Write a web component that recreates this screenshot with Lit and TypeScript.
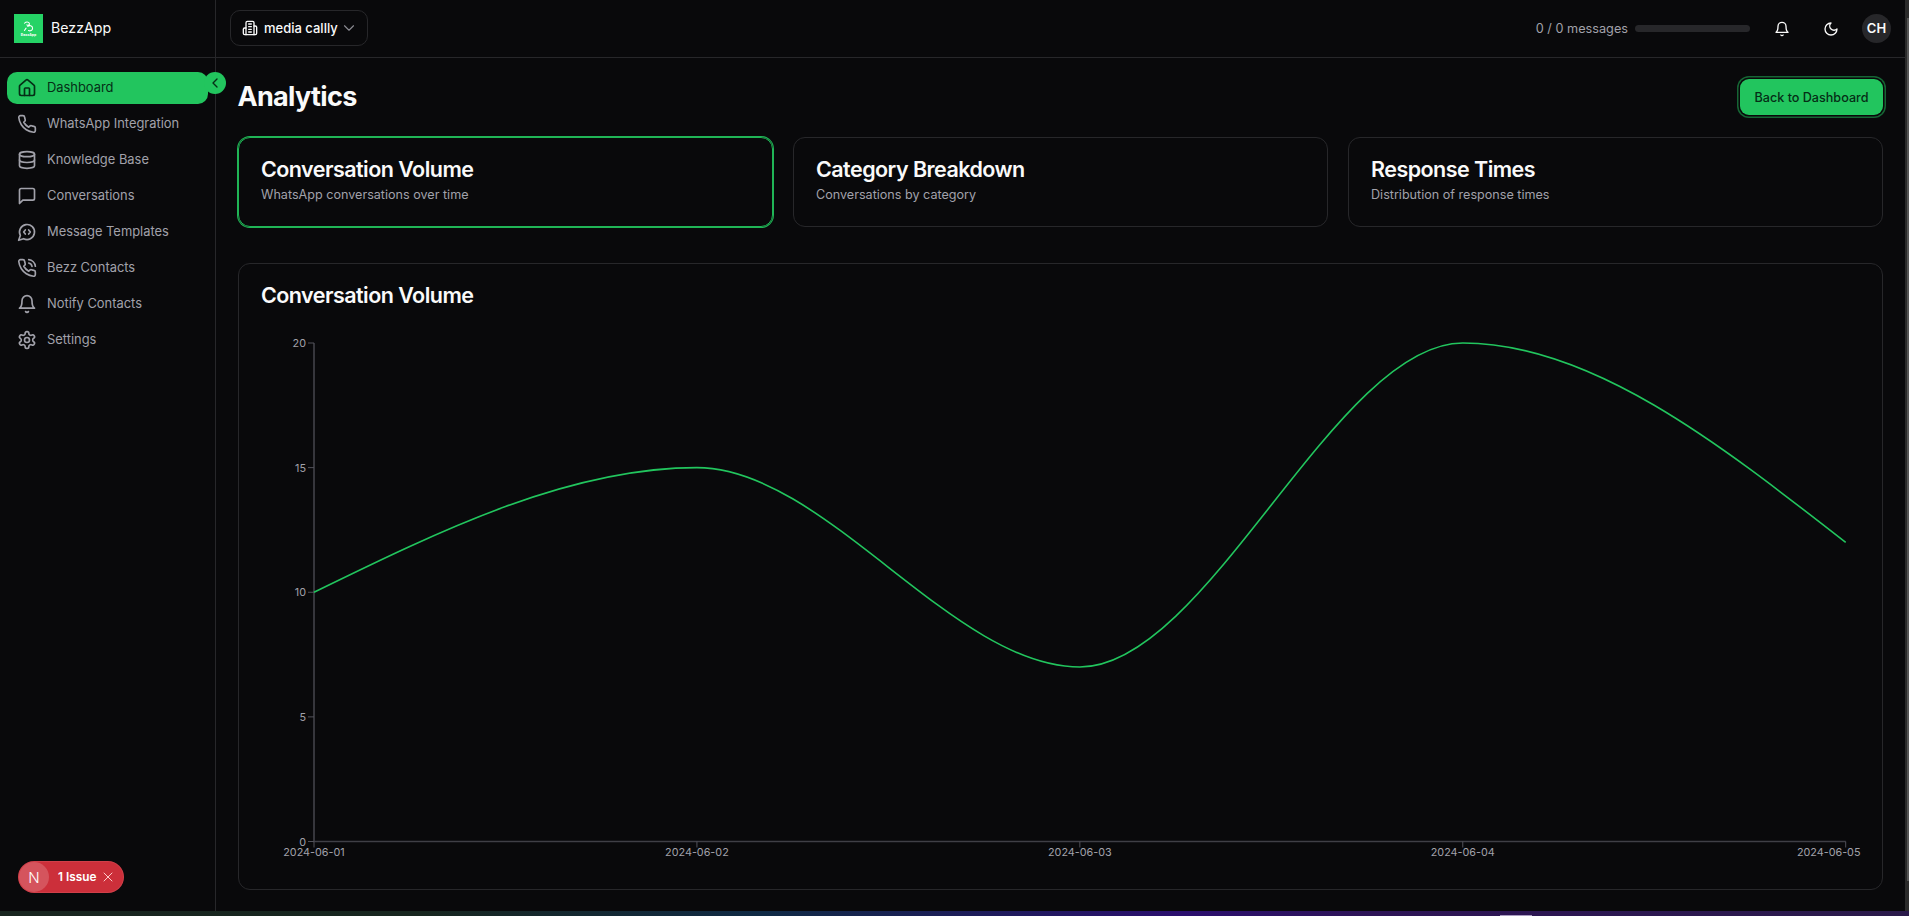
import { LitElement, html, css, svg } from "lit";
import { customElement } from "lit/decorators.js";

const icons: Record<string, unknown> = {
  home: svg`<path d="M15 21v-8a1 1 0 0 0-1-1h-4a1 1 0 0 0-1 1v8"/><path d="M3 10a2 2 0 0 1 .709-1.528l7-5.999a2 2 0 0 1 2.582 0l7 5.999A2 2 0 0 1 21 10v9a2 2 0 0 1-2 2H5a2 2 0 0 1-2-2z"/>`,
  phone: svg`<path d="M22 16.92v3a2 2 0 0 1-2.18 2 19.79 19.79 0 0 1-8.63-3.07 19.5 19.5 0 0 1-6-6 19.79 19.79 0 0 1-3.07-8.67A2 2 0 0 1 4.11 2h3a2 2 0 0 1 2 1.72 12.84 12.84 0 0 0 .7 2.81 2 2 0 0 1-.45 2.11L8.09 9.91a16 16 0 0 0 6 6l1.27-1.27a2 2 0 0 1 2.11-.45 12.84 12.84 0 0 0 2.81.7A2 2 0 0 1 22 16.92z"/>`,
  database: svg`<ellipse cx="12" cy="5" rx="9" ry="3"/><path d="M3 5V19A9 3 0 0 0 21 19V5"/><path d="M3 12A9 3 0 0 0 21 12"/>`,
  message: svg`<path d="M21 15a2 2 0 0 1-2 2H7l-4 4V5a2 2 0 0 1 2-2h14a2 2 0 0 1 2 2z"/>`,
  template: svg`<path d="M10 9.5 8 12l2 2.5"/><path d="m14 9.5 2 2.5-2 2.5"/><path d="M7.9 20A9 9 0 1 0 4 16.1L2 22z"/>`,
  phoneCall: svg`<path d="M22 16.92v3a2 2 0 0 1-2.18 2 19.79 19.79 0 0 1-8.63-3.07 19.5 19.5 0 0 1-6-6 19.79 19.79 0 0 1-3.07-8.67A2 2 0 0 1 4.11 2h3a2 2 0 0 1 2 1.72 12.84 12.84 0 0 0 .7 2.81 2 2 0 0 1-.45 2.11L8.09 9.91a16 16 0 0 0 6 6l1.27-1.27a2 2 0 0 1 2.11-.45 12.84 12.84 0 0 0 2.81.7A2 2 0 0 1 22 16.92z"/><path d="M14.05 2a9 9 0 0 1 8 7.94"/><path d="M14.05 6A5 5 0 0 1 18 10"/>`,
  bell: svg`<path d="M6 8a6 6 0 0 1 12 0c0 7 3 9 3 9H3s3-2 3-9"/><path d="M10.3 21a1.94 1.94 0 0 0 3.4 0"/>`,
  settings: svg`<path d="M12.22 2h-.44a2 2 0 0 0-2 2v.18a2 2 0 0 1-1 1.73l-.43.25a2 2 0 0 1-2 0l-.15-.08a2 2 0 0 0-2.73.73l-.22.38a2 2 0 0 0 .73 2.73l.15.1a2 2 0 0 1 1 1.72v.51a2 2 0 0 1-1 1.74l-.15.09a2 2 0 0 0-.73 2.73l.22.38a2 2 0 0 0 2.73.73l.15-.08a2 2 0 0 1 2 0l.43.25a2 2 0 0 1 1 1.73V20a2 2 0 0 0 2 2h.44a2 2 0 0 0 2-2v-.18a2 2 0 0 1 1-1.73l.43-.25a2 2 0 0 1 2 0l.15.08a2 2 0 0 0 2.73-.73l.22-.39a2 2 0 0 0-.73-2.73l-.15-.08a2 2 0 0 1-1-1.74v-.5a2 2 0 0 1 1-1.74l.15-.09a2 2 0 0 0 .73-2.73l-.22-.38a2 2 0 0 0-2.73-.73l-.15.08a2 2 0 0 1-2 0l-.43-.25a2 2 0 0 1-1-1.73V4a2 2 0 0 0-2-2z"/><circle cx="12" cy="12" r="3"/>`,
  building: svg`<path d="M6 22V4a2 2 0 0 1 2-2h8a2 2 0 0 1 2 2v18Z"/><path d="M6 12H4a2 2 0 0 0-2 2v6a2 2 0 0 0 2 2h2"/><path d="M18 9h2a2 2 0 0 1 2 2v9a2 2 0 0 1-2 2h-2"/><path d="M10 6h4"/><path d="M10 10h4"/><path d="M10 14h4"/><path d="M10 18h4"/>`,
  chevronDown: svg`<path d="m6 9 6 6 6-6"/>`,
  chevronLeft: svg`<path d="m15 18-6-6 6-6"/>`,
  moon: svg`<path d="M12 3a6 6 0 0 0 9 9 9 9 0 1 1-9-9Z"/>`,
  x: svg`<path d="M18 6 6 18"/><path d="m6 6 12 12"/>`,
};

function icon(name: string, cls = "") {
  return html`<svg class="icon ${cls}" viewBox="0 0 24 24" fill="none" stroke="currentColor" stroke-width="2" stroke-linecap="round" stroke-linejoin="round">${icons[name]}</svg>`;
}

const navItems = [
  { label: "Dashboard", icon: "home", active: true },
  { label: "WhatsApp Integration", icon: "phone" },
  { label: "Knowledge Base", icon: "database" },
  { label: "Conversations", icon: "message" },
  { label: "Message Templates", icon: "template" },
  { label: "Bezz Contacts", icon: "phoneCall" },
  { label: "Notify Contacts", icon: "bell" },
  { label: "Settings", icon: "settings" },
];

const tabs = [
  { title: "Conversation Volume", sub: "WhatsApp conversations over time", active: true },
  { title: "Category Breakdown", sub: "Conversations by category" },
  { title: "Response Times", sub: "Distribution of response times" },
];

const data = [
  { date: "2024-06-01", value: 10 },
  { date: "2024-06-02", value: 15 },
  { date: "2024-06-03", value: 7 },
  { date: "2024-06-04", value: 20 },
  { date: "2024-06-05", value: 12 },
];

// chart frame, in svg coordinates
const X0 = 53;
const X1 = 1584.7;
const Y0 = 517.5;
const Y1 = 19;
const px = (i: number) => X0 + ((X1 - X0) * i) / (data.length - 1);
const py = (v: number) => Y0 - ((Y0 - Y1) * v) / 20;

// same maths as d3 curveMonotoneX
function monotonePath(pts: { x: number; y: number }[]) {
  const n = pts.length;
  const sl: number[] = [];
  for (let i = 0; i < n - 1; i++) sl.push((pts[i + 1].y - pts[i].y) / (pts[i + 1].x - pts[i].x));
  const t: number[] = new Array(n).fill(0);
  const sign = (v: number) => (v < 0 ? -1 : 1);
  for (let i = 1; i < n - 1; i++) {
    const h0 = pts[i].x - pts[i - 1].x;
    const h1 = pts[i + 1].x - pts[i].x;
    const p = (sl[i - 1] * h1 + sl[i] * h0) / (h0 + h1);
    t[i] = (sign(sl[i - 1]) + sign(sl[i])) * Math.min(Math.abs(sl[i - 1]), Math.abs(sl[i]), 0.5 * Math.abs(p)) || 0;
  }
  t[0] = ((3 * sl[0]) - t[1]) / 2;
  t[n - 1] = ((3 * sl[n - 2]) - t[n - 2]) / 2;
  let d = `M${pts[0].x},${pts[0].y}`;
  for (let i = 0; i < n - 1; i++) {
    const dx = (pts[i + 1].x - pts[i].x) / 3;
    d += `C${pts[i].x + dx},${pts[i].y + dx * t[i]},${pts[i + 1].x - dx},${pts[i + 1].y - dx * t[i + 1]},${pts[i + 1].x},${pts[i + 1].y}`;
  }
  return d;
}

@customElement("app-root")
export class AppRoot extends LitElement {
  static styles = css`
    :host {
      display: flex;
      flex-direction: column;
      height: 100vh;
      overflow: hidden;
      background: #09090b;
      color: #fafafa;
      font-family: Inter, "Liberation Sans", sans-serif;
      font-size: 14px;
    }
    .icon {
      width: 20px;
      height: 20px;
      flex: none;
      display: block;
    }
    .frame {
      flex: 1;
      min-height: 0;
      display: flex;
    }
    .app {
      flex: 1;
      min-width: 0;
      display: flex;
      position: relative;
    }
    .sidebar {
      width: 216px;
      flex: none;
      box-sizing: border-box;
      border-right: 1px solid #27272a;
      position: relative;
    }
    .brand {
      height: 58px;
      box-sizing: border-box;
      border-bottom: 1px solid #27272a;
      display: flex;
      align-items: center;
      gap: 8px;
      padding-left: 14px;
      font-size: 14.2px;
      font-weight: 400;
      color: #fafafa;
    }
    .brand b {
      font-weight: 400;
      padding-bottom: 2px;
    }
    .logo {
      width: 29px;
      height: 29px;
      background: #25d366;
      display: flex;
      flex-direction: column;
      align-items: center;
      justify-content: center;
      color: #fff;
    }
    .logo svg {
      width: 13px;
      height: 13px;
      display: block;
    }
    .logo span {
      font-size: 3.5px;
      line-height: 4px;
      font-weight: 700;
    }
    nav {
      display: flex;
      flex-direction: column;
      gap: 4px;
      padding: 14px 7px 0;
    }
    .nav-item {
      height: 32px;
      box-sizing: border-box;
      padding: 0 0 1px 10px;
      display: flex;
      align-items: center;
      gap: 10px;
      border-radius: 10px;
      color: #a1a1aa;
      font-size: 12.9px;
      font-weight: 400;
    }
    .nav-item.active {
      background: #22c55e;
      color: #052e16;
    }
    .collapse {
      position: absolute;
      right: -11px;
      top: 72px;
      width: 22px;
      height: 22px;
      border-radius: 50%;
      background: #22c55e;
      color: #052e16;
      display: flex;
      align-items: center;
      justify-content: center;
      z-index: 2;
    }
    .collapse .icon {
      width: 16px;
      height: 16px;
    }
    .main {
      flex: 1;
      min-width: 0;
      display: flex;
      flex-direction: column;
    }
    header {
      height: 58px;
      flex: none;
      box-sizing: border-box;
      border-bottom: 1px solid #27272a;
      display: flex;
      align-items: center;
      justify-content: space-between;
      padding: 0 14px;
    }
    .org {
      width: 138px;
      height: 36px;
      margin-top: -1px;
      box-sizing: border-box;
      border: 1px solid #27272a;
      border-radius: 10px;
      display: flex;
      align-items: center;
      padding: 0 0 1px 11px;
      font-size: 13px;
      font-weight: 500;
      color: #fafafa;
    }
    .org .building {
      width: 16px;
      height: 16px;
      margin-right: 6px;
    }
    .org .chev {
      width: 18px;
      height: 18px;
      margin-left: 2px;
      color: #8b8b93;
      stroke-width: 1.5;
    }
    .top-right {
      display: flex;
      align-items: center;
    }
    .usage {
      color: #a1a1aa;
      font-size: 12.7px;
      white-space: nowrap;
      padding-bottom: 1px;
    }
    .bar {
      width: 115px;
      height: 7px;
      border-radius: 4px;
      background: #27272a;
      margin: 0 24px 0 7px;
    }
    .top-btn {
      width: 16px;
      height: 16px;
      color: #fafafa;
      margin-right: 33px;
    }
    .top-btn .icon {
      width: 16px;
      height: 16px;
    }
    .avatar {
      width: 29px;
      height: 29px;
      box-sizing: border-box;
      padding-bottom: 1px;
      border-radius: 50%;
      background: #27272a;
      color: #fafafa;
      font-size: 13px;
      font-weight: 600;
      display: flex;
      align-items: center;
      justify-content: center;
      margin-left: -10px;
    }
    .content {
      flex: 1;
      min-height: 0;
      padding: 21px 22px;
      display: flex;
      flex-direction: column;
    }
    .title-row {
      height: 36px;
      display: flex;
      align-items: center;
      justify-content: space-between;
      margin-bottom: 22px;
    }
    h1 {
      margin: 0 0 1px -0.5px;
      font-size: 27px;
      font-weight: 700;
      letter-spacing: -0.025em;
      color: #fafafa;
    }
    .back {
      width: 143px;
      height: 36px;
      box-sizing: border-box;
      display: flex;
      align-items: center;
      justify-content: center;
      border-radius: 9px;
      background: #22c55e;
      color: #052e16;
      font-size: 12.6px;
      font-weight: 500;
      box-shadow: 0 0 0 1.5px #09090b, 0 0 0 3px #166534;
    }
    .tabs {
      display: grid;
      grid-template-columns: repeat(3, 1fr);
      gap: 20px;
      margin-bottom: 36.5px;
    }
    .tab {
      box-sizing: border-box;
      height: 89.5px;
      border: 1px solid #27272a;
      border-radius: 12px;
      padding: 19px 22px;
    }
    .tab.active {
      border-color: #20b556;
      box-shadow: 0 0 0 1px #20b556;
    }
    .tab h3,
    .chart-card h3 {
      margin: 0;
      font-size: 21.5px;
      line-height: 24px;
      font-weight: 600;
      letter-spacing: -0.025em;
      color: #fafafa;
    }
    .chart-card h3 {
      line-height: 23px;
    }
    .tab p {
      margin: 4px 0 0;
      font-size: 12.6px;
      line-height: 20px;
      color: #a1a1aa;
    }
    .chart-card {
      flex: 1;
      min-height: 0;
      box-sizing: border-box;
      border: 1px solid #27272a;
      border-radius: 12px;
      padding: 20px 22px;
    }
    .chart {
      display: block;
      margin-top: 17px;
      width: 1599px;
      height: 544px;
      overflow: visible;
    }
    .chart text {
      font-family: Inter, "Liberation Sans", sans-serif;
      font-size: 10.8px;
      fill: #a1a1aa;
    }
    .axis {
      stroke: #3f3f46;
      stroke-width: 1.7;
      fill: none;
    }
    .tick {
      stroke: #52525b;
      stroke-width: 1;
    }
    .line {
      stroke: #22c55e;
      stroke-width: 1.6;
      fill: none;
    }
    .issue {
      position: absolute;
      left: 18px;
      top: 861px;
      width: 106px;
      height: 32px;
      box-sizing: border-box;
      border-radius: 16px;
      background: #cc2f3a;
      box-shadow: inset 0 0 0 1px rgba(255, 255, 255, 0.08);
      color: #fff;
      display: flex;
      align-items: center;
      font-size: 11.8px;
      font-weight: 600;
      z-index: 3;
    }
    .issue .n {
      width: 30px;
      height: 30px;
      margin-left: 1px;
      border-radius: 50%;
      background: rgba(255, 255, 255, 0.18);
      display: flex;
      align-items: center;
      justify-content: center;
      font-size: 15px;
      font-weight: 300;
    }
    .issue .lbl {
      margin-left: 9px;
      white-space: nowrap;
    }
    .issue .icon {
      width: 16px;
      height: 16px;
      margin-left: 4px;
      color: #fecaca;
      stroke-width: 1.5;
    }
    .scrollbar {
      width: 4px;
      flex: none;
      background: #2b2b2b;
      display: flex;
      justify-content: flex-end;
      padding: 18px 0 30px;
      box-sizing: border-box;
    }
    .scrollbar div {
      width: 2px;
      background: #555;
    }
    .wallpaper {
      height: 5px;
      flex: none;
      position: relative;
      background: linear-gradient(90deg, #18251f 0%, #17261f 22%, #0f2a45 40%, #2a0e6e 62%, #2d1456 72%, #2a1a4a 100%);
    }
    .wallpaper div {
      position: absolute;
      left: 1500px;
      bottom: 0;
      width: 32px;
      height: 1.5px;
      background: #a99bc0;
    }
  `;

  render() {
    const pts = data.map((d, i) => ({ x: px(i), y: py(d.value) }));
    return html`
      <div class="frame">
        <div class="app">
          <aside class="sidebar">
            <div class="brand">
              <div class="logo">
                <svg viewBox="0 0 16 16" fill="none" stroke="currentColor" stroke-width="1.3" stroke-linecap="round">
                  <path d="M3 4c2-2 5-2 6 0s-2 3-3 2M7 8c2-2 6-1 6 2s-3 4-5 3M5 10l-2 3" />
                </svg>
                <span>BezzApp</span>
              </div>
              <b>BezzApp</b>
            </div>
            <nav>
              ${navItems.map(
                (n) => html`<div class="nav-item ${n.active ? "active" : ""}">${icon(n.icon)}${n.label}</div>`
              )}
            </nav>
            <div class="collapse">${icon("chevronLeft")}</div>
          </aside>
          <div class="main">
            <header>
              <div class="org">${icon("building", "building")}media callly${icon("chevronDown", "chev")}</div>
              <div class="top-right">
                <span class="usage">0 / 0 messages</span>
                <div class="bar"></div>
                <div class="top-btn">${icon("bell")}</div>
                <div class="top-btn">${icon("moon")}</div>
                <div class="avatar">CH</div>
              </div>
            </header>
            <div class="content">
              <div class="title-row">
                <h1>Analytics</h1>
                <div class="back">Back to Dashboard</div>
              </div>
              <div class="tabs">
                ${tabs.map(
                  (t) => html`<div class="tab ${t.active ? "active" : ""}">
                    <h3>${t.title}</h3>
                    <p>${t.sub}</p>
                  </div>`
                )}
              </div>
              <div class="chart-card">
                <h3>Conversation Volume</h3>
                <svg class="chart">
                  <path class="axis" d="M${X0},${Y1}V${Y0}H${X1}" />
                  ${[0, 5, 10, 15, 20].map(
                    (v) => svg`<line class="tick" x1=${X0 - 6} x2=${X0} y1=${py(v)} y2=${py(v)} />
                      <text x=${X0 - 8} y=${py(v) + 4} text-anchor="end">${v}</text>`
                  )}
                  ${data.map(
                    (d, i) => svg`<line class="tick" x1=${px(i)} x2=${px(i)} y1=${Y0} y2=${Y0 + 6} />
                      <text x=${i === 4 ? px(i) - 17 : px(i)} y=${Y0 + 14.5} text-anchor="middle">${d.date}</text>`
                  )}
                  <path class="line" d=${monotonePath(pts)} />
                </svg>
              </div>
            </div>
          </div>
          <div class="issue">
            <div class="n">N</div>
            <span class="lbl">1 Issue</span>
            ${icon("x")}
          </div>
        </div>
        <div class="scrollbar"><div></div></div>
      </div>
      <div class="wallpaper"><div></div></div>
    `;
  }
}
